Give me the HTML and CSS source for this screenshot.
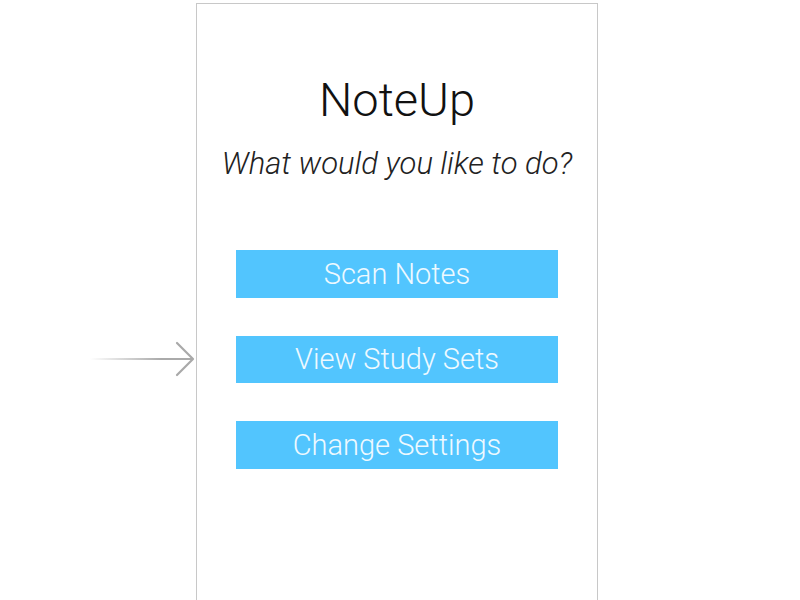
FILE: index.html
```html
<!DOCTYPE html>
<html>
<head>
<meta charset="utf-8">
<link rel="stylesheet" href="styles.css">
</head>
<body>
<div class="stage">
  <div class="frame">
    <div class="entry-arrow">
      <div class="arrow-line"></div>
      <svg class="arrow-head" width="20" height="36" viewBox="0 0 20 36">
        <polyline points="2,2 18,18 2,34" fill="none" stroke="#a9a9a9" stroke-width="2.2" stroke-linecap="round" stroke-linejoin="round"/>
      </svg>
    </div>
    <h1 class="title">NoteUp</h1>
    <p class="subtitle">What would you like to do?</p>
    <div class="buttons">
      <div class="btn">Scan Notes</div>
      <div class="btn">View Study Sets</div>
      <div class="btn">Change Settings</div>
    </div>
  </div>
</div>
</body>
</html>
```
FILE: styles.css
```css
html, body {
  margin: 0;
  padding: 0;
  background: #ffffff;
  overflow: hidden;
}
.stage {
  display: flex;
  padding-left: 196px;
  padding-top: 3px;
  height: 597px;
}
.frame {
  position: relative;
  width: 400px;
  height: 620px;
  border: 1px solid #c8c8c8;
  display: flex;
  flex-direction: column;
  align-items: center;
  font-family: Roboto, "Liberation Sans", sans-serif;
  font-weight: 300;
}
.title {
  margin: 68px 0 0 0;
  font-size: 47px;
  font-weight: 300;
  color: #111111;
  line-height: 56px;
}
.subtitle {
  margin: 18px 0 0 0;
  font-size: 31px;
  font-style: italic;
  color: #222222;
  line-height: 36px;
}
.buttons {
  margin-top: 68px;
  display: flex;
  flex-direction: column;
  gap: 38px;
}
.btn {
  width: 322px;
  height: 47.5px;
  background: #52c5fe;
  color: #eef9ff;
  font-size: 29px;
  font-weight: 300;
  display: flex;
  align-items: center;
  justify-content: center;
}
.entry-arrow {
  position: absolute;
  left: -107px;
  top: 337px;
  width: 106px;
  height: 36px;
}
.arrow-line {
  position: absolute;
  left: 0;
  top: 17px;
  width: 102px;
  height: 2px;
  background: linear-gradient(to right, rgba(170,170,170,0), #aaaaaa 70%);
}
.arrow-head {
  position: absolute;
  right: 1px;
  top: 0;
}
```
